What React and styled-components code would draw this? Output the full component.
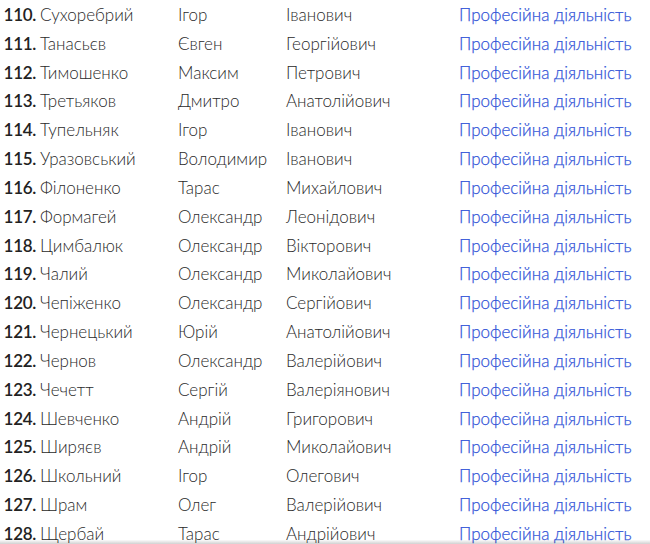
import React from 'react'
import styled, { createGlobalStyle } from 'styled-components'

const GlobalStyle = createGlobalStyle`
  html, body {
    margin: 0;
    padding: 0;
    background: #ffffff;
    overflow: hidden;
  }
  body {
    font-family: Lato, "Open Sans", "Liberation Sans", sans-serif;
  }
`

const Viewport = styled.div`
  position: relative;
  width: 650px;
  height: 544px;
  overflow: hidden;
`

const List = styled.ol`
  list-style: none;
  margin: 0;
  padding: 0;
`

const Row = styled.li`
  display: grid;
  grid-template-columns: 36px 142px 108px 173px auto;
  align-items: center;
  height: 28.83px;
  font-size: 17px;
  font-weight: 300;
  color: #2a2a2a;
`

const Num = styled.span`
  text-align: right;
  font-weight: 600;
  color: #222222;
  letter-spacing: -0.3px;
`

const Cell = styled.span`
  padding-left: ${p => p.$pad || 0}px;
  white-space: nowrap;
`

const Link = styled.a`
  color: #3456d8;
  font-weight: 300;
  text-decoration: none;
  white-space: nowrap;
  -webkit-text-stroke: 0.25px #3456d8;
`

const BottomShade = styled.div`
  position: absolute;
  left: 0;
  right: 0;
  bottom: 0;
  height: 4px;
  background: linear-gradient(to bottom, rgba(0, 0, 0, 0.02), rgba(0, 0, 0, 0.18));
`

const people = [
  [110, 'Сухоребрий', 'Ігор', 'Іванович'],
  [111, 'Танасьєв', 'Євген', 'Георгійович'],
  [112, 'Тимошенко', 'Максим', 'Петрович'],
  [113, 'Третьяков', 'Дмитро', 'Анатолійович'],
  [114, 'Тупельняк', 'Ігор', 'Іванович'],
  [115, 'Уразовський', 'Володимир', 'Іванович'],
  [116, 'Філоненко', 'Тарас', 'Михайлович'],
  [117, 'Формагей', 'Олександр', 'Леонідович'],
  [118, 'Цимбалюк', 'Олександр', 'Вікторович'],
  [119, 'Чалий', 'Олександр', 'Миколайович'],
  [120, 'Чепіженко', 'Олександр', 'Сергійович'],
  [121, 'Чернецький', 'Юрій', 'Анатолійович'],
  [122, 'Чернов', 'Олександр', 'Валерійович'],
  [123, 'Чечетт', 'Сергій', 'Валеріянович'],
  [124, 'Шевченко', 'Андрій', 'Григорович'],
  [125, 'Ширяєв', 'Андрій', 'Миколайович'],
  [126, 'Школьний', 'Ігор', 'Олегович'],
  [127, 'Шрам', 'Олег', 'Валерійович'],
  [128, 'Щербай', 'Тарас', 'Андрійович'],
]

export default function App() {
  return (
    <Viewport>
      <GlobalStyle />
      <List>
        {people.map(([n, last, first, middle]) => (
          <Row key={n}>
            <Num>{n}.</Num>
            <Cell $pad={4}>{last}</Cell>
            <Cell>{first}</Cell>
            <Cell>{middle}</Cell>
            <Link href="#">Професійна діяльність</Link>
          </Row>
        ))}
      </List>
      <BottomShade />
    </Viewport>
  )
}
